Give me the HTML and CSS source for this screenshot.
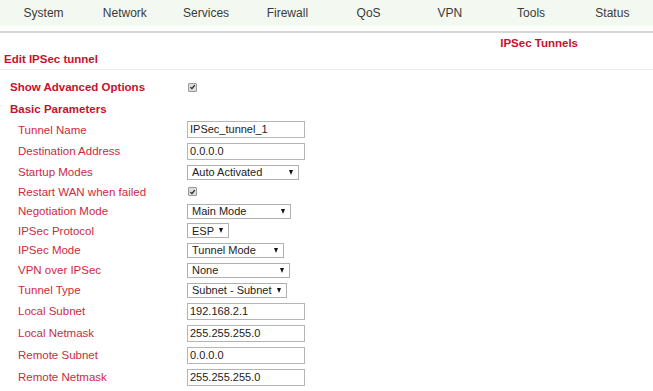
FILE: index.html
```html
<!DOCTYPE html>
<html>
<head>
<meta charset="utf-8">
<link rel="stylesheet" href="styles.css">
</head>
<body>
<nav class="nav">
  <span class="nav-item">System</span>
  <span class="nav-item">Network</span>
  <span class="nav-item">Services</span>
  <span class="nav-item">Firewall</span>
  <span class="nav-item">QoS</span>
  <span class="nav-item">VPN</span>
  <span class="nav-item">Tools</span>
  <span class="nav-item">Status</span>
</nav>
<header class="title-bar">
  <div class="crumb">IPSec Tunnels</div>
  <div class="page-title">Edit IPSec tunnel</div>
</header>
<main class="form">
  <div class="row h22"><span class="head">Show Advanced Options</span><span class="check"><svg viewBox="0 0 10 10" width="8" height="8"><path d="M2 5.2 L4.2 7.4 L8.2 2.4" fill="none" stroke="#222" stroke-width="1.8"/></svg></span></div>
  <div class="row h21"><span class="head">Basic Parameters</span></div>
  <div class="row h21"><span class="label">Tunnel Name</span><span class="input">IPSec_tunnel_1</span></div>
  <div class="row h22"><span class="label">Destination Address</span><span class="input">0.0.0.0</span></div>
  <div class="row h20"><span class="label">Startup Modes</span><span class="select w112"><span>Auto Activated</span><i class="arrow"></i></span></div>
  <div class="row h19"><span class="label">Restart WAN when failed</span><span class="check"><svg viewBox="0 0 10 10" width="8" height="8"><path d="M2 5.2 L4.2 7.4 L8.2 2.4" fill="none" stroke="#222" stroke-width="1.8"/></svg></span></div>
  <div class="row h20"><span class="label">Negotiation Mode</span><span class="select w104"><span>Main Mode</span><i class="arrow"></i></span></div>
  <div class="row h19"><span class="label">IPSec Protocol</span><span class="select w42"><span>ESP</span><i class="arrow"></i></span></div>
  <div class="row h20"><span class="label">IPSec Mode</span><span class="select w97"><span>Tunnel Mode</span><i class="arrow"></i></span></div>
  <div class="row h20"><span class="label">VPN over IPSec</span><span class="select w103"><span>None</span><i class="arrow"></i></span></div>
  <div class="row h20"><span class="label">Tunnel Type</span><span class="select w99"><span>Subnet - Subnet</span><i class="arrow"></i></span></div>
  <div class="row h22"><span class="label">Local Subnet</span><span class="input">192.168.2.1</span></div>
  <div class="row h22"><span class="label">Local Netmask</span><span class="input">255.255.255.0</span></div>
  <div class="row h22"><span class="label">Remote Subnet</span><span class="input">0.0.0.0</span></div>
  <div class="row h22"><span class="label">Remote Netmask</span><span class="input">255.255.255.0</span></div>
</main>
</body>
</html>
```
FILE: styles.css
```css
* { box-sizing: border-box; }
html, body { margin: 0; padding: 0; background: #fff; }
body {
  font-family: "Liberation Sans", Arial, sans-serif;
  font-size: 11.5px;
  overflow: hidden;
}
.nav {
  display: flex;
  height: 26px;
  background: #f3f8f0;
  padding-left: 3px;
  align-items: center;
}
.nav-item {
  flex: 1;
  text-align: center;
  font-size: 12px;
  color: #3a3a3a;
  padding-bottom: 1px;
}
.title-bar {
  margin-top: 5px;
  border-top: 2px solid #d6d6d6;
  border-bottom: 1px solid #ececec;
  height: 39px;
}
.crumb {
  text-align: right;
  padding-right: 75px;
  font-weight: bold;
  color: #c8102e;
  font-size: 11.5px;
  height: 19px;
  line-height: 19px;
  padding-top: 1px;
  box-sizing: content-box;
}
.page-title {
  font-weight: bold;
  color: #c8102e;
  font-size: 11.5px;
  padding-left: 4px;
  line-height: 14px;
  margin-top: -1px;
}
.form {
  padding-top: 6px;
}
.row {
  display: flex;
  align-items: center;
  white-space: nowrap;
}
.h19 { height: 19px; }
.h20 { height: 20px; }
.h21 { height: 21px; }
.h22 { height: 22px; }
.head {
  width: 187px;
  flex-shrink: 0;
  padding-left: 10px;
  font-weight: bold;
  color: #c8102e;
}
.label {
  width: 187px;
  flex-shrink: 0;
  padding-left: 18px;
  color: #cc2a40;
}
.input {
  width: 118px;
  height: 17px;
  border: 1px solid #b5b5b5;
  padding-left: 2px;
  line-height: 15px;
  font-size: 11px;
  color: #222;
  background: #fff;
}
.select {
  display: inline-flex;
  align-items: center;
  justify-content: space-between;
  height: 15px;
  border: 1px solid #b0b0b0;
  padding: 0 5px 0 4px;
  font-size: 11px;
  color: #222;
  background: #fff;
  white-space: nowrap;
}
.w112 { width: 112px; }
.w104 { width: 104px; }
.w42 { width: 42px; }
.w97 { width: 97px; }
.w103 { width: 103px; }
.w99 { width: 100px; }
.arrow {
  flex-shrink: 0;
  width: 0;
  height: 0;
  border-left: 2.5px solid transparent;
  border-right: 2.5px solid transparent;
  border-top: 5px solid #111;
}
.check {
  width: 9px;
  height: 9px;
  border: 1px solid #9a9a9a;
  border-radius: 1px;
  background: #dcdcdc;
  display: inline-flex;
  align-items: center;
  justify-content: center;
  margin-left: 1px;
}
```
